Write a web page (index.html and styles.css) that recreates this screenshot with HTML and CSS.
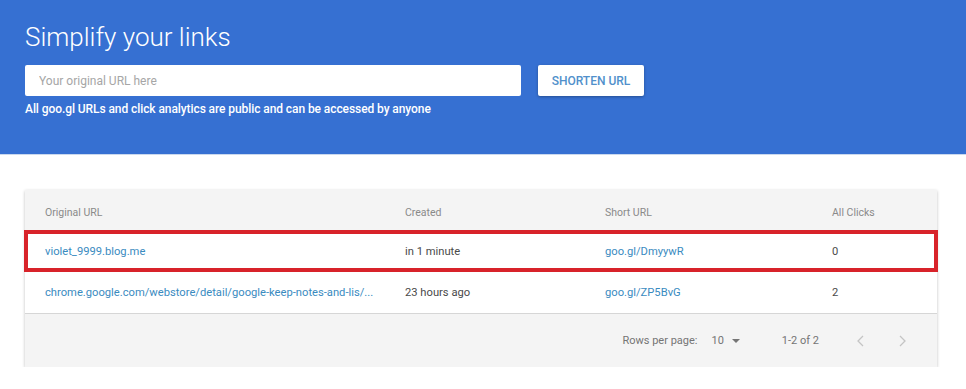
FILE: index.html
```html
<!doctype html>
<html>
<head>
<meta charset="utf-8">
<title>goo.gl URL Shortener</title>
<link rel="stylesheet" href="styles.css">
</head>
<body>

<div id="topBar">
	<h1 class="title">Simplify your links</h1>
	<div class="shortenForm">
		<input type="text" class="urlInput" placeholder="Your original URL here">
		<button class="shortenBtn">SHORTEN URL</button>
	</div>
	<p class="note">All goo.gl URLs and click analytics are public and can be accessed by anyone</p>
</div>

<div class="card">
	<div class="row head">
		<span>Original URL</span>
		<span>Created</span>
		<span>Short URL</span>
		<span>All Clicks</span>
	</div>
	<div class="row marked">
		<a href="#">violet_9999.blog.me</a>
		<span>in 1 minute</span>
		<a href="#">goo.gl/DmyywR</a>
		<span>0</span>
	</div>
	<div class="row">
		<a href="#">chrome.google.com/webstore/detail/google-keep-notes-and-lis/...</a>
		<span>23 hours ago</span>
		<a href="#">goo.gl/ZP5BvG</a>
		<span>2</span>
	</div>
	<div class="footer">
		<span class="rowsLabel">Rows per page:</span>
		<span class="rowsSelect">10 <svg width="10" height="6" viewBox="0 0 10 6"><path d="M1 1 L5 5 L9 1 Z" fill="#757575"/></svg></span>
		<span class="range">1-2 of 2</span>
		<span class="pager">
			<svg width="10" height="12" viewBox="0 0 10 12"><path d="M7 1 L2 6 L7 11" fill="none" stroke="#c4c4c4" stroke-width="1.3"/></svg>
			<svg width="10" height="12" viewBox="0 0 10 12"><path d="M3 1 L8 6 L3 11" fill="none" stroke="#c4c4c4" stroke-width="1.3"/></svg>
		</span>
	</div>
</div>

</body>
</html>
```

FILE: styles.css
```css
body {
	margin: 0;
	font-family: Roboto, "Liberation Sans", sans-serif;
	background-color: #ffffff;
	color: #333333;
}

#topBar {
	background-color: #3670d2;
	height: 155px;
	padding: 22px 25px 0 25px;
	box-sizing: border-box;
	border-bottom: 1px solid #c9d8ee;
}

.title {
	margin: 0;
	font-size: 26px;
	font-weight: 300;
	line-height: 30px;
	color: #ffffff;
}

.shortenForm {
	display: flex;
	gap: 17px;
	margin-top: 13px;
}

.urlInput {
	width: 496px;
	height: 31px;
	box-sizing: border-box;
	border: none;
	border-radius: 2px;
	padding: 0 14px;
	font-family: Roboto, "Liberation Sans", sans-serif;
	font-size: 12px;
	outline: none;
}

.urlInput::placeholder {
	color: #a6a6a6;
}

.shortenBtn {
	width: 106px;
	height: 31px;
	border: none;
	border-radius: 2px;
	background: #ffffff;
	color: #5190cb;
	font-family: Roboto, "Liberation Sans", sans-serif;
	font-size: 12px;
	font-weight: 500;
	box-shadow: 0px 1px 3px rgba(0, 0, 0, 0.3);
}

.note {
	margin: 5px 0 0 0;
	font-size: 12px;
	font-weight: 500;
	letter-spacing: -0.08px;
	line-height: 16px;
	color: #ffffff;
}

.card {
	margin: 35px 29px 0 25px;
	background: #ffffff;
	box-shadow: 0px 1px 3px rgba(0, 0, 0, 0.25);
}

.row {
	display: grid;
	grid-template-columns: 360px 200px 227px 100px;
	align-items: center;
	height: 41px;
	padding-left: 20px;
	font-size: 11.2px;
	color: #4a4a4a;
}

.row a {
	color: #3a8bbf;
	text-decoration: none;
}

.head {
	background: #f4f4f4;
	color: #8a8a8a;
	font-size: 10.5px;
	padding-top: 4px;
	box-sizing: border-box;
}

.marked {
	position: relative;
}

.marked::after {
	content: "";
	position: absolute;
	top: -1px;
	bottom: 0;
	left: -1px;
	right: -1px;
	border: 4px solid #d8232a;
}

.footer {
	display: flex;
	align-items: center;
	justify-content: flex-end;
	height: 53px;
	background: #f4f4f4;
	border-top: 1px solid #d6d6d6;
	font-size: 11px;
	color: #757575;
	padding-right: 30px;
}

.rowsSelect {
	margin-left: 14px;
	display: inline-flex;
	align-items: center;
	gap: 7px;
}

.range {
	margin-left: 41px;
}

.pager {
	margin-left: 37px;
	display: inline-flex;
	gap: 31px;
}
```
